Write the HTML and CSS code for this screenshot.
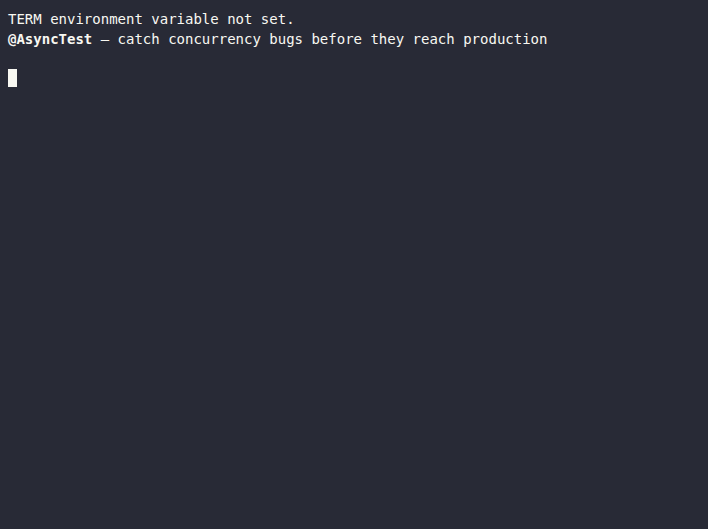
FILE: index.html
```html
<!DOCTYPE html>
<html>
<head>
<meta charset="utf-8">
<link rel="stylesheet" href="styles.css">
</head>
<body>
<div class="term">
<div class="line">TERM environment variable not set.</div>
<div class="line"><span class="bold">@AsyncTest</span> — catch concurrency bugs before they reach production</div>
<div class="line"></div>
<div class="line"><span class="cursor"></span></div>
</div>
</body>
</html>
```
FILE: styles.css
```css
html, body {
  margin: 0;
  padding: 0;
  background: #282a36;
  height: 100%;
}
.term {
  padding: 9px 8px 8px;
  font-family: "DejaVu Sans Mono", monospace;
  font-size: 14px;
  line-height: 20px;
  color: #f8f8f2;
}
.line {
  height: 20px;
  white-space: pre;
}
.bold {
  font-weight: bold;
}
.cursor {
  display: inline-block;
  width: 9px;
  height: 18px;
  vertical-align: top;
  background: #f8f8f2;
}
```
